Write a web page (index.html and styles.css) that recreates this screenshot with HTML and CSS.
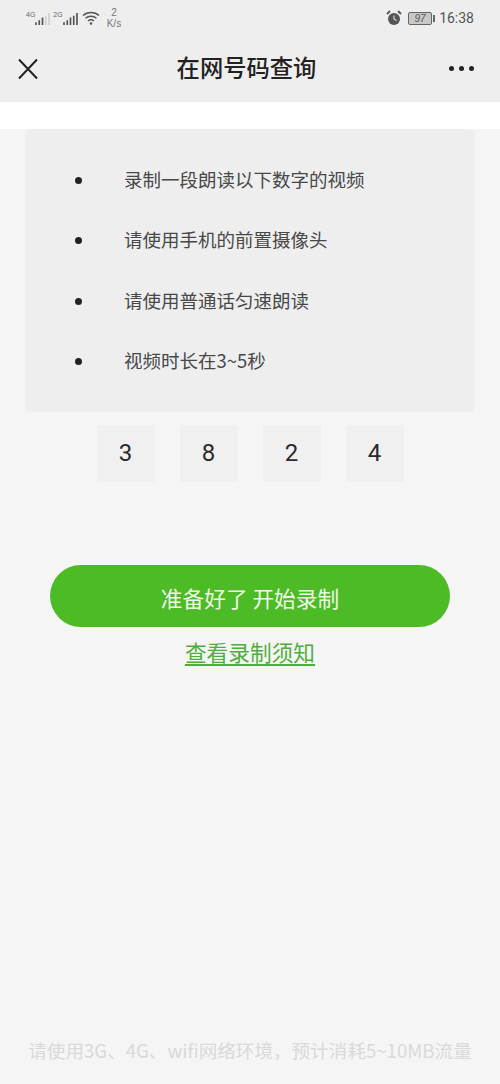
FILE: index.html
```html
<!DOCTYPE html>
<html lang="zh">
<head>
<meta charset="utf-8">
<title>在网号码查询</title>
<link rel="stylesheet" href="styles.css">
</head>
<body>
<div class="page">
  <header class="top">
    <div class="status">
      <div class="status-left">
        <span class="net"><span class="net-label">4G</span>
          <svg class="bars" viewBox="0 0 16 14"><path d="M1 14v-3M4.500 14v-5M8 14v-8" stroke="#555" stroke-width="1.800"/><path d="M11.500 14v-10M15 14v-13" stroke="#ccc" stroke-width="1.500"/></svg></span>
        <span class="net"><span class="net-label">2G</span>
          <svg class="bars" viewBox="0 0 16 14"><path d="M1 14v-3M4.500 14v-5M8 14v-8M11.500 14v-10M15 14v-13" stroke="#555" stroke-width="1.800"/></svg></span>
        <svg class="wifi" viewBox="0 0 18 14"><path d="M1 4.500C5.500.500 12.500.500 17 4.500M3.500 7.300C6.500 4.700 11.500 4.700 14.500 7.300M6 10C7.700 8.700 10.300 8.700 12 10" fill="none" stroke="#555" stroke-width="1.500"/><circle cx="9" cy="12.500" r="1.300" fill="#555"/></svg>
        <span class="speed"><span>2</span><span>K/s</span></span>
      </div>
      <div class="status-right">
        <svg class="alarm" viewBox="0 0 16 16"><circle cx="8" cy="9" r="6" fill="#555"/><path d="M8 5.500V9l2.500 1.500" fill="none" stroke="#ddd" stroke-width="1.100"/><path d="M1 4l3-3M15 4l-3-3" stroke="#555" stroke-width="1.800"/></svg>
        <span class="battery"><span class="battery-body">97</span><span class="battery-tip"></span></span>
        <span class="time">16:38</span>
      </div>
    </div>
    <div class="nav">
      <svg class="close" viewBox="0 0 22 22"><path d="M2 1.500l18 19M20 1.500l-18 19" fill="none" stroke="#222" stroke-width="2"/></svg>
      <h1 class="title">在网号码查询</h1>
      <div class="more"><i></i><i></i><i></i></div>
    </div>
  </header>
  <div class="white-band"></div>
  <main class="content">
    <ul class="tips">
      <li>录制一段朗读以下数字的视频</li>
      <li>请使用手机的前置摄像头</li>
      <li>请使用普通话匀速朗读</li>
      <li>视频时长在3~5秒</li>
    </ul>
    <div class="digits">
      <span class="digit">3</span>
      <span class="digit">8</span>
      <span class="digit">2</span>
      <span class="digit">4</span>
    </div>
    <button class="primary">准备好了 开始录制</button>
    <a class="notice" href="#">查看录制须知</a>
    <p class="foot">请使用3G、4G、wifi网络环境，预计消耗5~10MB流量</p>
  </main>
</div>
</body>
</html>
```

FILE: styles.css
```css
* { box-sizing: border-box; }
html, body { margin: 0; padding: 0; }
body {
  width: 500px;
  height: 1084px;
  overflow: hidden;
  background: #f5f5f6;
  font-family: "Noto Sans CJK SC", "Noto Sans", sans-serif;
}
.page { display: flex; flex-direction: column; height: 1084px; }
.top { height: 102px; background: #eeeeee; padding: 0 26px 0 17px; display: flex; flex-direction: column; }
.status { height: 36px; display: flex; justify-content: space-between; align-items: center; padding: 0 0 0 9px; }
.status-left, .status-right { display: flex; align-items: center; }
.status-left { gap: 3px; }
.net { display: flex; align-items: flex-end; height: 14px; }
.net-label { font: 7px/7px "Liberation Sans", sans-serif; color: #666; align-self: flex-start; }
.bars { width: 15px; height: 13px; }
.wifi { width: 18px; height: 14px; margin-left: 1px; }
.speed { display: flex; flex-direction: column; align-items: center; font: 10px/11px "Liberation Sans", sans-serif; color: #777; margin-left: 4px; }
.status-right { gap: 4px; }
.alarm { width: 16px; height: 16px; margin-right: 2px; }
.battery { display: flex; align-items: center; gap: 1px; }
.battery-body { width: 24px; height: 13px; border: 1px solid #666; border-radius: 2px; background: #c8c8c8; font: italic 10px/11px "Liberation Sans", sans-serif; color: #555; text-align: center; }
.battery-tip { width: 2px; height: 7px; background: #666; }
.time { font: 14px/16px "Roboto", sans-serif; color: #555; }
.nav { flex: 1; display: flex; align-items: center; justify-content: space-between; margin-top: -1px; }
.close { width: 22px; height: 22px; }
.title { margin: 0 0 0 5px; padding-bottom: 3px; font-size: 23.300px; font-weight: 500; line-height: 32px; color: #222; }
.more { display: flex; gap: 5px; }
.more i { width: 5px; height: 5px; border-radius: 50%; background: #222; }
.white-band { height: 27px; background: #fff; flex: none; }
.content { flex: 1; display: flex; flex-direction: column; align-items: center; position: relative; }
.tips { margin: 0; width: 450px; height: 283px; background: #eeeeef; border-radius: 6px; list-style: none; padding: 21px 0 0 50px; }
.tips li { position: relative; padding-left: 49px; height: 60.300px; line-height: 58px; font-size: 18.500px; color: #484848; }
.tips li::before { content: ""; position: absolute; left: 0; top: 27px; width: 7px; height: 7px; border-radius: 50%; background: #222; }
.digits { display: flex; gap: 25px; margin-top: 13px; }
.digit { width: 58px; height: 57px; display: flex; align-items: center; justify-content: center; background: #f0f0f0; font: 24px "Roboto", sans-serif; color: #2a2a2a; padding-bottom: 2px; }
.primary { margin-top: 83px; width: 400px; height: 62px; border: 0; border-radius: 31px; background: #4dbb26; color: #eef9e8; font-family: inherit; font-size: 21.700px; line-height: 30px; padding-top: 5px; }
.notice { margin-top: 10px; font-size: 21.700px; line-height: 30px; color: #4fae3a; text-decoration: underline; text-underline-offset: 3px; }
.foot { position: absolute; left: 0; right: 0; bottom: 21px; margin: 0; text-align: center; font-size: 18.600px; line-height: 26px; color: #d9d9d9; white-space: nowrap; }
```
